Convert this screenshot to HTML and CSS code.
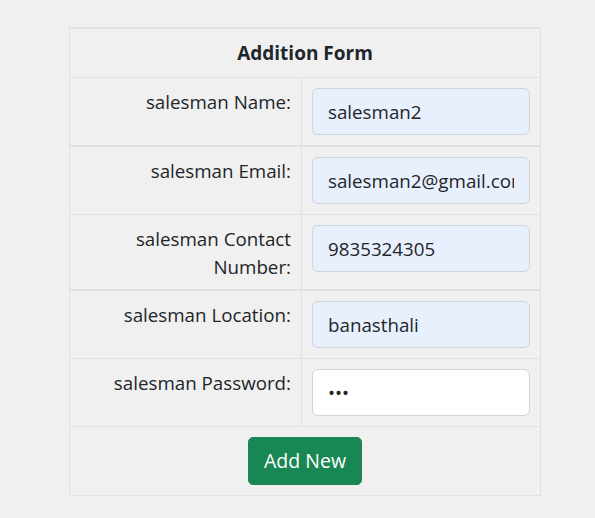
FILE: index.html
```html
<!DOCTYPE html>
<html>
<head>
<meta charset="utf-8">
<link rel="stylesheet" href="styles.css">
</head>
<body>
<form class="form">
  <div class="row head"><div class="title">Addition Form</div></div>
  <div class="row thick">
    <label class="lbl">salesman Name:</label>
    <div class="field"><input class="inp auto" type="text" value="salesman2"></div>
  </div>
  <div class="row">
    <label class="lbl">salesman Email:</label>
    <div class="field"><input class="inp auto" type="text" value="salesman2@gmail.com"></div>
  </div>
  <div class="row thick">
    <label class="lbl two">salesman Contact Number:</label>
    <div class="field"><input class="inp auto" type="text" value="9835324305"></div>
  </div>
  <div class="row">
    <label class="lbl">salesman Location:</label>
    <div class="field"><input class="inp auto" type="text" value="banasthali"></div>
  </div>
  <div class="row">
    <label class="lbl">salesman Password:</label>
    <div class="field"><input class="inp" type="password" value="123"></div>
  </div>
  <div class="row head foot"><button class="btn" type="button">Add New</button></div>
</form>
</body>
</html>
```
FILE: styles.css
```css
html, body { margin: 0; padding: 0; }
body {
  background: #f0f0f0;
  font-family: "Open Sans", "Noto Sans", sans-serif;
  font-size: 18.75px;
  line-height: 28px;
  color: #212529;
}
.form {
  width: 470px;
  margin: 27px 0 0 69px;
  border-left: 1px solid #dee2e6;
  border-right: 1px solid #dee2e6;
  border-top: 2px solid #dee2e6;
}
.row {
  display: grid;
  grid-template-columns: 232px 1fr;
  border-bottom: 1px solid #dee2e6;
}
.row.thick { border-bottom-width: 2px; }
.row.head {
  display: flex;
  justify-content: center;
  padding: 10px;
}
.title { font-weight: 700; font-size: 19px; }
.lbl {
  text-align: right;
  padding: 10px;
  border-right: 1px solid #dee2e6;
}
.lbl.two { padding-bottom: 8px; }
.field { padding: 10px; }
.inp {
  display: block;
  box-sizing: border-box;
  width: 100%;
  height: 47px;
  padding: 8px 15px;
  font: inherit;
  color: #212529;
  background: #fff;
  border: 1px solid #ced4da;
  border-radius: 6px;
  outline: none;
}
.inp.auto { background: #e8f0fe; }
.btn {
  display: block;
  box-sizing: border-box;
  height: 48px;
  font: inherit;
  font-size: 19.5px;
  line-height: 28px;
  color: #fff;
  background: #198754;
  border: 1px solid #198754;
  border-radius: 5px;
  padding: 9px 15px;
}
```
